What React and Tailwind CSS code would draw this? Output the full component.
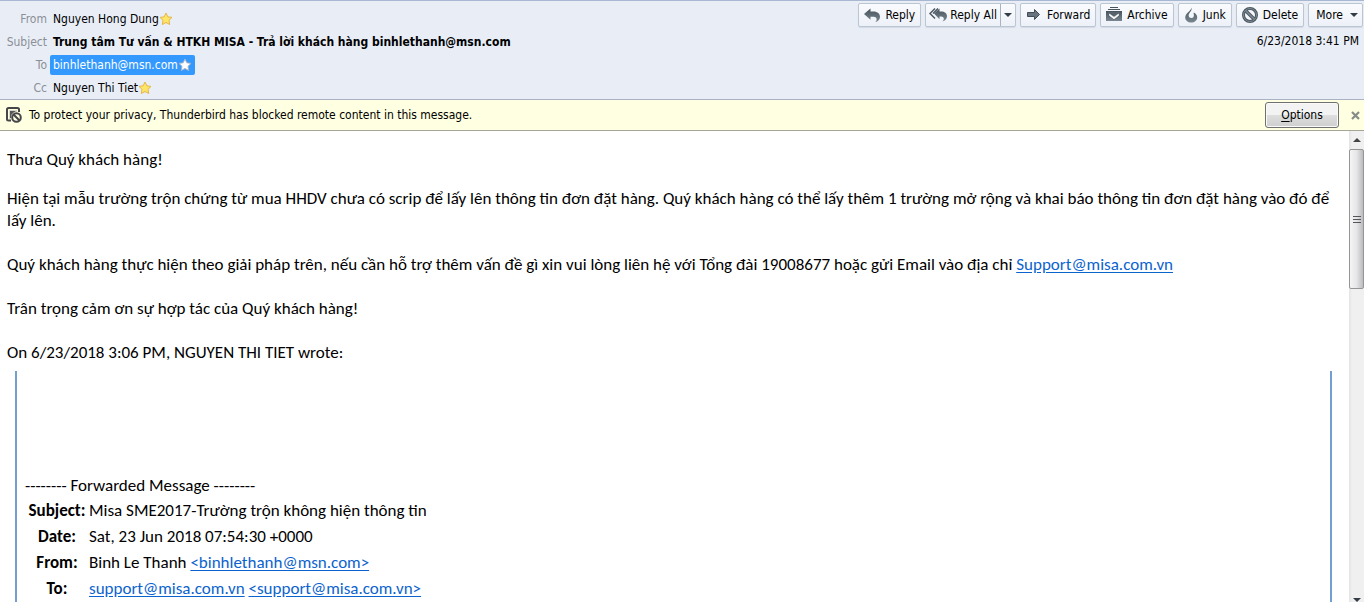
import React from 'react';
import clsx from 'clsx';

const RECIPIENTS = [
  { label: 'From', name: 'Nguyen Hong Dung', star: 'gold' },
  { label: 'Subject', subject: 'Trung tâm Tư vấn & HTKH MISA - Trả lời khách hàng binhlethanh@msn.com' },
  { label: 'To', name: 'binhlethanh@msn.com', star: 'white', selected: true },
  { label: 'Cc', name: 'Nguyen Thi Tiet', star: 'gold' },
];

const BUTTON = 'flex h-6 items-center rounded-xs border border-[#bcc6d3] bg-linear-to-b from-[#fafbfd] to-[#edf1f8] shadow-[0_1px_1px_#d3dae6]';

function IconGradient({ id }) {
  return (
    <defs>
      <linearGradient id={id} x1="0" y1="0" x2="0" y2="1">
        <stop offset="0" stopColor="#46525c" />
        <stop offset="1" stopColor="#7a8791" />
      </linearGradient>
    </defs>
  );
}

function ReplyIcon() {
  return (
    <svg width="16" height="16" viewBox="0 0 16 16" aria-hidden="true">
      <IconGradient id="reply" />
      <path d="M0 7 6.500 1.500v3h3C13.500 4.500 16 6.800 16 9.800c0 2.700-2 4.900-5 5.400 1.300-1 1.800-2 1.600-3.300-.2-1.300-1.400-2.100-3.100-2.100h-3v3z" fill="url(#reply)" />
    </svg>
  );
}

function ReplyAllIcon() {
  return (
    <svg width="18" height="16" viewBox="0 0 18 16" aria-hidden="true">
      <IconGradient id="reply-all" />
      <path d="M6 1.500 1 6.500l5 5M9 1.500l-5 5" fill="none" stroke="#4b5761" strokeWidth="1.500" />
      <path d="M5 6.500 10.500 1.500v3h1.500c3.600 0 6 2 6 4.800 0 2.500-1.800 4.700-4.700 5.200 1.200-1 1.700-2 1.500-3.100-.2-1.300-1.300-2-2.800-2h-1.500v2.800z" fill="url(#reply-all)" />
    </svg>
  );
}

function ForwardIcon() {
  return (
    <svg width="16" height="16" viewBox="0 0 16 16" aria-hidden="true">
      <path d="M1.500 5.500h7V2.500L13.500 7.500 8.500 12.500V9.500h-7z" fill="#68757f" stroke="#414c55" strokeWidth="1" />
    </svg>
  );
}

function ArchiveIcon() {
  return (
    <svg width="16" height="16" viewBox="0 0 16 16" aria-hidden="true">
      <IconGradient id="archive" />
      <path d="M4 .5h8M2 2.500h12" stroke="#47535d" />
      <path d="M0 4h16v10H0z" fill="url(#archive)" />
      <path d="M2 5h12v3.500L8 13 2 8.500z" fill="#57636d" />
      <path d="M3.500 7v1.500L8 12l4.500-3.500V7L8 10.200z" fill="#ffffff" stroke="#ffffff" strokeWidth="0.600" />
    </svg>
  );
}

function JunkIcon() {
  return (
    <svg width="14" height="16" viewBox="1 0 14 16" aria-hidden="true">
      <IconGradient id="junk" />
      <path d="M8.500.5C9 3 8 4 7 5.200c-1 1.200-1.500 2.300-1.300 3.600.2 1.500 1.500 2.400 3 2.200 1.600-.2 2.400-1.500 2.200-3-.1-.9-.4-1.500-.2-2.500 2 1 3.500 2.500 3.500 5 0 2.900-2.600 5-6 5s-6-2.100-6-5c0-2.300 1.500-3.700 3-5.200C6.700 3.900 8.200 2.500 8.500.5z" fill="url(#junk)" />
    </svg>
  );
}

function DeleteIcon() {
  return (
    <svg width="16" height="16" viewBox="0 0 16 16" aria-hidden="true">
      <circle cx="8" cy="8" r="6.500" fill="none" stroke="#4a5660" strokeWidth="3" />
      <path d="M3.500 3.500l9 9" stroke="#4a5660" strokeWidth="3.400" />
      <circle cx="8" cy="8" r="6.500" fill="none" stroke="#7f8b95" strokeWidth="1" />
      <path d="M3.500 3.500l9 9" stroke="#7f8b95" strokeWidth="1.400" />
    </svg>
  );
}

function BlockedIcon() {
  return (
    <svg width="16" height="16" viewBox="0 0 16 16" aria-hidden="true">
      <path d="M5 13.500H2.500A1.500 1.500 0 0 1 1 12V2.500A1.500 1.500 0 0 1 2.500 1h9A1.500 1.500 0 0 1 13 2.500V5" fill="none" stroke="#45454a" strokeWidth="2" />
      <path d="M3 3h8v2L7 6.500 5.500 8 5 12H3z" fill="#d9d9c8" />
      <path d="M4 4h6L7.500 5.500 5.500 7.500 5 11H4z" fill="#55555a" />
      <circle cx="10.500" cy="10.500" r="4.300" fill="#ffffe1" stroke="#45454a" strokeWidth="2" />
      <path d="M7.500 7.500l6 6" stroke="#45454a" strokeWidth="2" />
    </svg>
  );
}

function Star({ tone }) {
  const gold = tone === 'gold';
  return (
    <svg width="14" height="14" viewBox="0 0 14 14" aria-hidden="true">
      <path
        d="M7 1l1.800 3.800 4.200.6-3 2.900.7 4.200L7 10.500l-3.700 2 .7-4.200-3-2.900 4.200-.6z"
        fill={gold ? '#ffe566' : '#ffffff'}
        stroke={gold ? '#e5b54a' : '#a9b4c4'}
        strokeLinejoin="round"
      />
    </svg>
  );
}

function Caret({ className }) {
  return (
    <svg width="8" height="4" viewBox="0 0 8 4" className={className} aria-hidden="true">
      <path d="M0 0h8L4 4z" fill="#333b44" />
    </svg>
  );
}

function ToolbarButton({ icon, children }) {
  return (
    <button type="button" className={clsx(BUTTON, 'gap-[5px] px-[5px]')}>
      {icon}
      {children}
    </button>
  );
}

function Toolbar() {
  return (
    <div className="flex gap-1">
      <ToolbarButton icon={<ReplyIcon />}>Reply</ToolbarButton>
      <div className={BUTTON}>
        <button type="button" className="flex h-full items-center gap-[3px] px-[3px]">
          <ReplyAllIcon />
          Reply All
        </button>
        <button type="button" aria-label="Reply options" className="flex h-full items-center border-l border-[#a9b3c0] px-[3px]">
          <Caret />
        </button>
      </div>
      <ToolbarButton icon={<ForwardIcon />}>Forward</ToolbarButton>
      <ToolbarButton icon={<ArchiveIcon />}>Archive</ToolbarButton>
      <ToolbarButton icon={<JunkIcon />}>Junk</ToolbarButton>
      <ToolbarButton icon={<DeleteIcon />}>Delete</ToolbarButton>
      <button type="button" className={clsx(BUTTON, 'gap-[7px] pr-1 pl-[7px]')}>
        More
        <Caret />
      </button>
    </div>
  );
}

function MessageHeader() {
  return (
    <header className="flex justify-between border-y border-t-[#a9b8d2] border-b-[#a9b3c4] bg-[#e9eef6]">
      <dl className="pt-1.5">
        {RECIPIENTS.map(row => (
          <div key={row.label} className="flex h-[23px] items-center">
            <dt className="w-[47px] text-right text-[#8b8f96]">{row.label}</dt>
            <dd className="ml-[3px]">
              {row.subject ? (
                <span className="px-[3px] font-bold">{row.subject}</span>
              ) : (
                <span className={clsx('flex h-5 items-center rounded-xs px-[3px]', row.selected && 'bg-[#3399ff] text-white')}>
                  {row.name}
                  <Star tone={row.star} />
                </span>
              )}
            </dd>
          </div>
        ))}
      </dl>
      <div className="flex flex-col items-end pt-0.5 pr-px">
        <Toolbar />
        <time className="mt-1 pr-1 leading-5">6/23/2018 3:41 PM</time>
      </div>
    </header>
  );
}

function RemoteContentBar() {
  return (
    <div className="flex items-center border-b border-[#a5a598] bg-[#ffffe1] py-0.5 pr-1 pl-1.5">
      <BlockedIcon />
      <p className="ml-[7px] flex-1">To protect your privacy, Thunderbird has blocked remote content in this message.</p>
      <button
        type="button"
        className="h-[26px] w-[74px] rounded-[3px] border border-[#707070] bg-linear-to-b from-[#f3f3f3] from-50% via-[#dedede] via-50% to-[#cfcfcf] shadow-[inset_0_0_0_1px_#fafafa]"
      >
        <span className="underline underline-offset-2">O</span>ptions
      </button>
      <button type="button" aria-label="Close" className="ml-3">
        <svg width="9" height="9" viewBox="0 0 9 9" aria-hidden="true">
          <path d="M1 1l7 7M8 1L1 8" stroke="#868b88" strokeWidth="2.200" />
        </svg>
      </button>
    </div>
  );
}

function MailLink({ address, children }) {
  return (
    <a href={`mailto:${address}`} className="text-[#0b63ce] underline underline-offset-2">
      {children}
    </a>
  );
}

function ForwardedRow({ label, children }) {
  return (
    <tr className="h-[26px]">
      <th scope="row" className="w-16 font-bold">{label}</th>
      <td>{children}</td>
    </tr>
  );
}

function MessageBody() {
  return (
    <main className="flex-1 overflow-hidden pt-[18px] pr-4 pl-[7px] font-[Carlito,Lato,sans-serif] text-[17px] leading-[22px]">
      <p>Thưa Quý khách hàng!</p>
      <p className="mt-[17px]">
        Hiện tại mẫu trường trộn chứng từ mua HHDV chưa có scrip để lấy lên thông tin đơn đặt hàng. Quý khách hàng có thể
        lấy thêm 1 trường mở rộng và khai báo thông tin đơn đặt hàng vào đó để lấy lên.
      </p>
      <p className="mt-[22px]">
        Quý khách hàng thực hiện theo giải pháp trên, nếu cần hỗ trợ thêm vấn đề gì xin vui lòng liên hệ với Tổng đài
        19008677 hoặc gửi Email vào địa chỉ <MailLink address="Support@misa.com.vn">Support@misa.com.vn</MailLink>
      </p>
      <p className="mt-[22px]">Trân trọng cảm ơn sự hợp tác của Quý khách hàng!</p>
      <p className="mt-[22px]">On 6/23/2018 3:06 PM, NGUYEN THI TIET wrote:</p>

      <blockquote className="mt-[7px] mr-px ml-2 h-full border-x-2 border-[#729fcf] px-2 pt-[104px]">
        <p>-------- Forwarded Message --------</p>
        <table className="mt-px">
          <tbody>
            <ForwardedRow label="Subject:">Misa SME2017-Trường trộn không hiện thông tin</ForwardedRow>
            <ForwardedRow label="Date:">Sat, 23 Jun 2018 07:54:30 +0000</ForwardedRow>
            <ForwardedRow label="From:">
              Binh Le Thanh <MailLink address="binhlethanh@msn.com">&lt;binhlethanh@msn.com&gt;</MailLink>
            </ForwardedRow>
            <ForwardedRow label="To:">
              <MailLink address="support@misa.com.vn">support@misa.com.vn</MailLink>{' '}
              <MailLink address="support@misa.com.vn">&lt;support@misa.com.vn&gt;</MailLink>
            </ForwardedRow>
          </tbody>
        </table>
      </blockquote>
    </main>
  );
}

function Scrollbar() {
  return (
    <div className="flex w-[15px] flex-col items-center overflow-hidden bg-linear-to-r from-[#e3e3e3] to-[#f0f0f0] to-20%" aria-hidden="true">
      <svg width="8" height="4" viewBox="0 0 8 4" className="my-[7px] shrink-0">
        <path d="M0 4h8L4 0z" fill="#444444" />
      </svg>
      <div className="flex h-[140px] w-full shrink-0 flex-col items-center justify-center gap-0.5 rounded-xs border border-[#959595] bg-linear-to-r from-[#f5f5f5] via-[#e6e6e8] to-[#bcbcc0]">
        <span className="h-px w-2 bg-[#55555a]" />
        <span className="h-px w-2 bg-[#55555a]" />
        <span className="h-px w-2 bg-[#55555a]" />
      </div>
      <Caret className="mt-auto shrink-0" />
    </div>
  );
}

export default function App() {
  return (
    <div className="flex h-screen flex-col overflow-hidden bg-white font-['DejaVu_Sans_Condensed','Noto_Sans',sans-serif] text-xs text-black">
      <MessageHeader />
      <RemoteContentBar />
      <div className="flex min-h-0 flex-1">
        <MessageBody />
        <Scrollbar />
      </div>
    </div>
  );
}
